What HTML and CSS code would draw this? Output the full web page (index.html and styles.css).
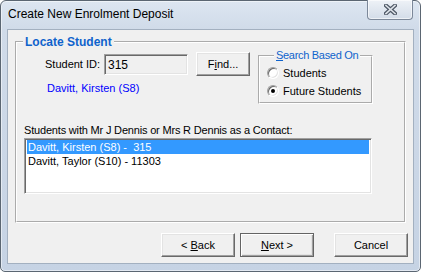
FILE: index.html
```html
<!DOCTYPE html>
<html lang="en">
<head>
    <meta charset="UTF-8">
    <title>Create New Enrolment Deposit</title>
    <link rel="stylesheet" href="styles.css">
</head>
<body>
    <div class="window">
        <div class="titlebar">
            <span class="title">Create New Enrolment Deposit</span>
            <button class="close-btn" aria-label="Close">
                <svg width="13" height="11" viewBox="0 0 13 11">
                    <path d="M2 1.5 L11 9.5 M11 1.5 L2 9.5" stroke="#4e5866" stroke-width="4" stroke-linecap="square" fill="none"/>
                    <path d="M2 1.5 L11 9.5 M11 1.5 L2 9.5" stroke="#dfe4ea" stroke-width="1.6" stroke-linecap="square" fill="none"/>
                </svg>
            </button>
        </div>
        <div class="client">
            <fieldset class="group locate">
                <legend>Locate Student</legend>
                <div class="locate-top">
                    <div class="locate-left">
                        <div class="id-row">
                            <label class="id-label" for="studentId">Student ID:</label>
                            <input id="studentId" class="textbox" value="315" readonly>
                            <button class="btn find-btn">F<u>i</u>nd...</button>
                        </div>
                        <div class="student-name">Davitt, Kirsten (S8)</div>
                    </div>
                    <fieldset class="group search">
                        <legend><u>S</u>earch Based On</legend>
                        <label class="radio-row"><span class="radio"></span>Students</label>
                        <label class="radio-row"><span class="radio checked"></span>Future Students</label>
                    </fieldset>
                </div>
                <div class="list-label">Students with Mr J Dennis or Mrs R Dennis as a Contact:</div>
                <div class="listbox">
                    <div class="list-item selected">Davitt, Kirsten (S8) -  315</div>
                    <div class="list-item">Davitt, Taylor (S10) - 11303</div>
                </div>
            </fieldset>
            <div class="actions">
                <button class="btn">&lt; <u>B</u>ack</button>
                <button class="btn default"><u>N</u>ext &gt;</button>
                <button class="btn cancel">Cancel</button>
            </div>
        </div>
    </div>
</body>
</html>
```

FILE: styles.css
```css
* {
    margin: 0;
    padding: 0;
    box-sizing: border-box;
}

body {
    background: #fff;
    font-family: "Liberation Sans", Arial, sans-serif;
    font-size: 11px;
    color: #000;
}

.window {
    width: 421px;
    height: 272px;
    border: 1px solid #5b6672;
    border-radius: 6px 6px 5px 5px;
    background: linear-gradient(180deg, #dde6f1 0, #d0dbe9 28px, #c6d3e4 100%);
    box-shadow: inset 0 0 0 1px rgba(255, 255, 255, 0.5);
    display: flex;
    flex-direction: column;
    padding: 0 6px 7px 6px;
}

.titlebar {
    height: 28px;
    display: flex;
    justify-content: space-between;
    align-items: flex-start;
    padding-right: 1px;
}

.title {
    font-size: 12px;
    line-height: 14px;
    padding: 6px 0 0 1px;
}

.close-btn {
    width: 46px;
    height: 20px;
    margin-top: -1px;
    border: 1px solid #7c8899;
    border-top: none;
    border-radius: 0 0 4px 4px;
    background: linear-gradient(180deg, #eef2f7, #d3dce8);
    box-shadow: inset 0 0 0 1px rgba(255, 255, 255, 0.6);
    display: flex;
    align-items: center;
    justify-content: center;
    padding-bottom: 1px;
}

.client {
    flex: 1;
    background: #f0f0f0;
    border: 1px solid #a3b0c0;
    display: flex;
    flex-direction: column;
}

/* group boxes */
.group {
    border: 2px groove #fff;
}

.group > legend {
    padding: 0 2px;
    white-space: nowrap;
}

.locate {
    width: 391px;
    margin: 5px 0 0 7px;
    padding: 0 0 27px 0;
}

.locate > legend {
    margin-left: 6px;
    font-size: 12px;
    font-weight: bold;
    line-height: 14px;
    color: #0f63cc;
}

.locate-top {
    display: flex;
    align-items: flex-start;
}

.locate-left {
    padding: 3px 0 0 28px;
}

.id-row {
    display: flex;
    align-items: center;
    height: 24px;
}

.id-label {
    width: 59px;
}

.textbox {
    width: 84px;
    height: 21px;
    border: 1px solid;
    border-color: #a0a0a0 #fff #fff #a0a0a0;
    box-shadow: inset 1px 1px 0 #696969, inset -1px -1px 0 #e3e3e3;
    background: #f0f0f0;
    font-family: inherit;
    font-size: 12px;
    padding: 1px 3px 0;
    outline: none;
}

.btn {
    height: 24px;
    width: 74px;
    font-family: inherit;
    font-size: 11px;
    color: #000;
    background: #f0f0f0;
    border: 1px solid;
    border-color: #fff #696969 #696969 #fff;
    box-shadow: inset -1px -1px 0 #a0a0a0, inset 1px 1px 0 #e3e3e3;
}

.find-btn {
    width: 54px;
    margin-left: 8px;
}

.student-name {
    margin: 5px 0 0 2px;
    line-height: 14px;
    color: #0000ff;
}

.search {
    width: 115px;
    margin-left: 8px;
    padding: 2px 0 2px 7px;
}

.search > legend {
    margin-left: 7px;
    line-height: 13px;
    color: #0f63cc;
    letter-spacing: -0.3px;
}

.radio-row {
    display: flex;
    align-items: center;
    height: 18px;
    gap: 4px;
}

.radio {
    width: 12px;
    height: 12px;
    border-radius: 50%;
    background: #fff;
    border: 1px solid;
    border-color: #a0a0a0 #fff #fff #a0a0a0;
    box-shadow: inset 1px 1px 0 #696969, inset -1px -1px 0 #e3e3e3;
    display: flex;
    align-items: center;
    justify-content: center;
}

.radio.checked::after {
    content: "";
    width: 4px;
    height: 4px;
    border-radius: 50%;
    background: #000;
}

.list-label {
    margin: 19px 0 0 7px;
    line-height: 14px;
    letter-spacing: -0.18px;
}

.listbox {
    width: 348px;
    height: 56px;
    margin: 1px 0 0 7px;
    background: #fff;
    border: 1px solid;
    border-color: #a0a0a0 #fff #fff #a0a0a0;
    box-shadow: inset 1px 1px 0 #696969, inset -1px -1px 0 #e3e3e3;
    padding: 1px 2px 0 2px;
}

.list-item {
    height: 14px;
    line-height: 14px;
    padding-left: 1px;
    white-space: pre;
}

.list-item.selected {
    background: #3399ff;
    color: #fff;
}

.actions {
    display: flex;
    justify-content: flex-end;
    margin-top: 10px;
    padding-right: 5px;
    gap: 5px;
}

.btn.default {
    border: 1px solid #646464;
    box-shadow: inset 1px 1px 0 #fff, inset -1px -1px 0 #a0a0a0, inset -2px -2px 0 #e3e3e3;
}

.btn.cancel {
    margin-left: 15px;
}
```
